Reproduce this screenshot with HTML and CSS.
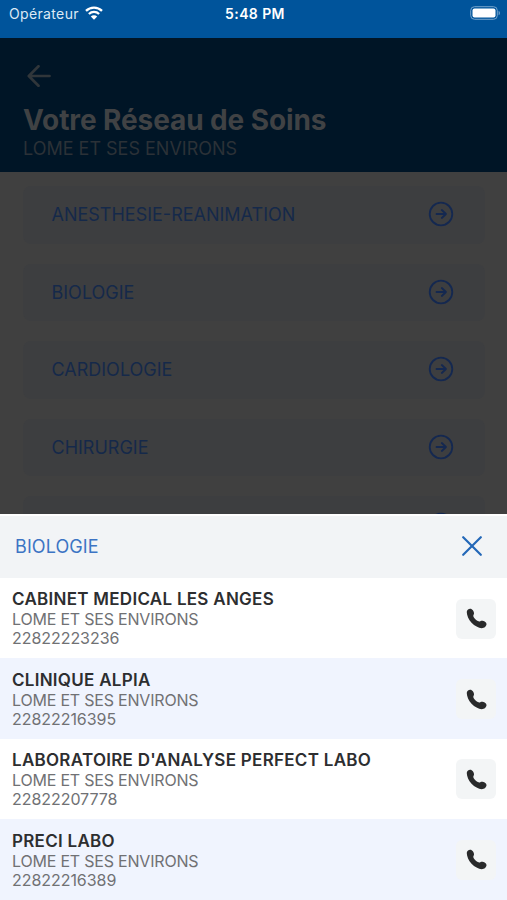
FILE: index.html
```html
<!DOCTYPE html>
<html lang="fr">
<head>
    <meta charset="UTF-8">
    <meta name="viewport" content="width=device-width, initial-scale=1.0">
    <title>Votre Réseau de Soins</title>
    <link rel="stylesheet" href="styles.css">
</head>
<body>

    <!-- Shared icons -->
    <svg class="sprite" width="0" height="0">
        <symbol id="arrow-circle" viewBox="0 0 26 26">
            <circle cx="13" cy="13" r="11.3" />
            <path d="M8.500 13h9.500M13.800 9L18 13l-4.200 4" />
        </symbol>
        <symbol id="phone" viewBox="0 0 22 22">
            <path d="M.8 4.300C.8 2.300 2.500.8 4.400.8c2.200 0 4 2.600 4 4.600 0 1.400-1 2-.7 3.200.5 1.700 3.400 4.700 5.400 5.400 1.300.4 2-.7 3.500-.7 2.300 0 4.900 1.500 4.900 3.500 0 2.400-2.400 4.400-5 4.400-3.300 0-7.500-2.500-10.700-5.700C2.700 12.400.8 7.600.8 4.300z" />
        </symbol>
    </svg>

    <div class="status-bar">
        <div class="carrier">
            <span>Opérateur</span>
            <svg class="wifi" width="18" height="14" viewBox="0 0 18 14">
                <path d="M1 4.800a11.500 11.500 0 0 1 16 0M3.900 8a7.300 7.300 0 0 1 10.200 0" />
                <path class="dot" d="M9 13.800L5.800 10.600a4.600 4.600 0 0 1 6.400 0z" />
            </svg>
        </div>
        <div class="time">5:48 PM</div>
        <div class="battery">
            <svg width="31" height="14" viewBox="0 0 31 14">
                <rect class="shell" x=".7" y=".7" width="26.600" height="12.600" rx="3.800" />
                <rect class="charge" x="2.500" y="2.500" width="23" height="9" rx="2" />
                <path class="tip" d="M28.600 4.700c1.800.8 1.800 3.800 0 4.600z" />
            </svg>
        </div>
    </div>

    <header class="header">
        <svg class="back" width="24" height="22" viewBox="0 0 24 22">
            <path d="M22.500 11H2M11.500 1.300L1.800 11l9.700 9.700" />
        </svg>
        <h1>Votre Réseau de Soins</h1>
        <p>LOME ET SES ENVIRONS</p>
    </header>

    <main class="specialties">
        <div class="card"><span>ANESTHESIE-REANIMATION</span><svg><use href="#arrow-circle" /></svg></div>
        <div class="card"><span>BIOLOGIE</span><svg><use href="#arrow-circle" /></svg></div>
        <div class="card"><span>CARDIOLOGIE</span><svg><use href="#arrow-circle" /></svg></div>
        <div class="card"><span>CHIRURGIE</span><svg><use href="#arrow-circle" /></svg></div>
        <div class="card"><span></span><svg><use href="#arrow-circle" /></svg></div>
    </main>

    <!-- Bottom sheet -->
    <section class="sheet">
        <div class="sheet-header">
            <h2>BIOLOGIE</h2>
            <svg class="close" width="20" height="20" viewBox="0 0 20 20">
                <path d="M1.200 1.200l17.600 17.600M18.800 1.200L1.200 18.800" />
            </svg>
        </div>
        <div class="provider">
            <div class="info">
                <h3>CABINET MEDICAL LES ANGES</h3>
                <p>LOME ET SES ENVIRONS</p>
                <p class="number">22822223236</p>
            </div>
            <div class="call"><svg><use href="#phone" /></svg></div>
        </div>
        <div class="provider">
            <div class="info">
                <h3>CLINIQUE ALPIA</h3>
                <p>LOME ET SES ENVIRONS</p>
                <p class="number">22822216395</p>
            </div>
            <div class="call"><svg><use href="#phone" /></svg></div>
        </div>
        <div class="provider">
            <div class="info">
                <h3>LABORATOIRE D'ANALYSE PERFECT LABO</h3>
                <p>LOME ET SES ENVIRONS</p>
                <p class="number">22822207778</p>
            </div>
            <div class="call"><svg><use href="#phone" /></svg></div>
        </div>
        <div class="provider">
            <div class="info">
                <h3>PRECI LABO</h3>
                <p>LOME ET SES ENVIRONS</p>
                <p class="number">22822216389</p>
            </div>
            <div class="call"><svg><use href="#phone" /></svg></div>
        </div>
    </section>

</body>
</html>
```
FILE: styles.css
```css
* {
    box-sizing: border-box;
}
body {
    margin: 0;
    height: 900px;
    overflow: hidden;
    display: flex;
    flex-direction: column;
    background-color: #404040;
    font-family: Inter, "Liberation Sans", sans-serif;
}
h1, h2, h3, p {
    margin: 0;
}
.sprite {
    position: absolute;
}
.status-bar {
    flex: none;
    height: 38px;
    padding: 0 6px 11px 9px;
    display: grid;
    grid-template-columns: 1fr auto 1fr;
    align-items: center;
    background-color: #00549b;
    color: #fff;
    font-size: 14px;
}
.carrier {
    display: flex;
    align-items: center;
    gap: 6px;
    color: #dce9f5;
    letter-spacing: 0.35px;
}
.wifi {
    fill: none;
    stroke: #fff;
    stroke-width: 2.3;
    margin-top: -2px;
}
.wifi .dot {
    fill: #fff;
    stroke: none;
}
.time {
    font-weight: 600;
    letter-spacing: 0.4px;
}
.battery {
    display: flex;
    justify-content: flex-end;
    margin-top: -1px;
}
.battery .shell {
    fill: none;
    stroke: #74a3cc;
}
.battery .charge {
    fill: #fff;
}
.battery .tip {
    fill: #74a3cc;
}
.header {
    flex: none;
    height: 134px;
    padding: 27px 23px 0;
    background-color: #001526;
}
.back {
    display: block;
    margin-left: 4px;
    fill: none;
    stroke: #30363a;
    stroke-width: 2.7;
    stroke-linecap: round;
    stroke-linejoin: round;
}
.header h1 {
    margin-top: 15px;
    font-size: 28px;
    line-height: 36px;
    font-weight: 700;
    letter-spacing: -0.1px;
    color: #404244;
}
.header p {
    font-size: 18px;
    line-height: 22px;
    color: #2b3137;
}
.specialties {
    flex: 1;
    min-height: 0;
    overflow: hidden;
    padding: 14px 22px 0 23px;
    display: flex;
    flex-direction: column;
    gap: 20px;
}
.card {
    flex: none;
    height: 57.600px;
    padding: 0 31px 0 28.500px;
    display: flex;
    align-items: center;
    justify-content: space-between;
    border-radius: 8px;
    background-color: #3d3e40;
    color: #15294a;
    font-size: 18px;
}
.card svg {
    width: 26px;
    height: 26px;
    margin-top: -1px;
    fill: none;
    stroke: #142850;
    stroke-width: 1.8;
    stroke-linecap: round;
    stroke-linejoin: round;
}
.sheet {
    flex: none;
    height: 386px;
    border-top: 2px solid #fff;
    background-color: #fff;
}
.sheet-header {
    height: 62px;
    padding: 0 25px 2px 15px;
    display: flex;
    align-items: center;
    justify-content: space-between;
    background-color: #f2f4f6;
}
.sheet-header h2 {
    font-size: 18px;
    font-weight: 400;
    letter-spacing: 0.1px;
    color: #3c74c4;
}
.close {
    fill: none;
    stroke: #2468b8;
    stroke-width: 2.2;
    stroke-linecap: round;
}
.provider {
    height: 80.400px;
    padding: 1px 11px 0 12px;
    display: flex;
    align-items: center;
    justify-content: space-between;
    background-color: #fff;
}
.provider:nth-child(odd) {
    background-color: #f0f4fe;
}
.info h3 {
    margin-top: 0.600px;
    font-size: 17px;
    line-height: 21px;
    font-weight: 600;
    letter-spacing: 0.28px;
    color: #2d2e30;
}
.info p {
    font-size: 16px;
    line-height: 19px;
    letter-spacing: -0.2px;
    color: #707174;
}
.info .number {
    letter-spacing: -0.05px;
}
.call {
    width: 40px;
    height: 40px;
    display: flex;
    align-items: center;
    justify-content: center;
    border-radius: 6px;
    background-color: #f3f5f6;
}
.call svg {
    width: 21px;
    height: 21px;
    fill: #292a2b;
}
```
